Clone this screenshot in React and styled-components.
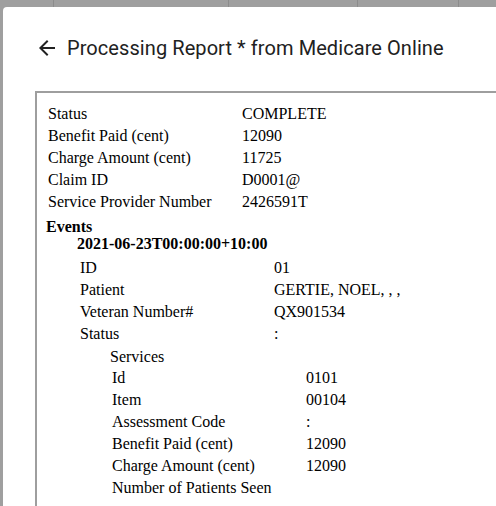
import React from "react";
import styled, { createGlobalStyle } from "styled-components";

const GlobalStyle = createGlobalStyle`
  html, body {
    margin: 0;
    padding: 0;
    overflow: hidden;
    background: #9f9f9f;
  }
  body {
    width: 496px;
    height: 506px;
  }
`;

const Page = styled.div`
  width: 496px;
  height: 506px;
  overflow: hidden;
  display: flex;
  flex-direction: column;
`;

const Strip = styled.div`
  display: flex;
  height: 7px;
  flex-shrink: 0;
`;

const StripCell = styled.div`
  width: ${(p) => p.$w}px;
  flex-shrink: 0;
  border-right: 1px solid #8c8c8c;
  box-sizing: border-box;
`;

const Dialog = styled.div`
  margin-left: 3px;
  width: 620px;
  flex: 1;
  background: #ffffff;
  border-top-left-radius: 4px;
  padding-left: 32px;
  display: flex;
  flex-direction: column;
`;

const TitleBar = styled.div`
  height: 84px;
  display: flex;
  align-items: center;
  gap: 8px;
  padding-bottom: 2px;
  box-sizing: border-box;
  font-family: Roboto, "Noto Sans", sans-serif;
  color: #212121;
`;

const BackIcon = styled.svg`
  width: 24px;
  height: 24px;
  fill: #212121;
  flex-shrink: 0;
`;

const Title = styled.h1`
  margin: 0;
  font-size: 20px;
  font-weight: 400;
  letter-spacing: 0.075px;
`;

const Report = styled.div`
  flex: 1;
  border-top: 2px solid #9e9e9e;
  border-left: 2px solid #9e9e9e;
  padding: 10px 10px 0 11px;
  font-family: "Liberation Serif", "Times New Roman", serif;
  font-size: 16px;
  color: #000;
`;

const Fields = styled.div`
  display: grid;
  grid-template-columns: 194px 1fr;
  line-height: 22px;
`;

const Heading = styled.div`
  font-weight: 700;
  line-height: 17px;
  margin-left: ${(p) => p.$shift || 0}px;
  margin-top: ${(p) => p.$top || 0}px;
`;

const SubHeading = styled.div`
  line-height: 21px;
  margin-left: -2px;
  margin-top: 1px;
`;

const Nested = styled.div`
  padding-left: ${(p) => p.$indent}px;
  margin-top: ${(p) => p.$top || 0}px;
`;

const Row = ({ label, value }) => (
  <>
    <div>{label}</div>
    <div>{value}</div>
  </>
);

export default function App() {
  return (
    <Page>
      <GlobalStyle />
      <Strip>
        <StripCell $w={54} />
        <StripCell $w={175} />
        <StripCell $w={129} />
        <StripCell $w={101} />
      </Strip>
      <Dialog>
        <TitleBar>
          <BackIcon viewBox="0 0 24 24" aria-hidden="true">
            <path d="M20 11H7.83l5.59-5.59L12 4l-8 8 8 8 1.41-1.41L7.83 13H20v-2z" />
          </BackIcon>
          <Title>Processing Report * from Medicare Online</Title>
        </TitleBar>
        <Report>
          <Fields>
            <Row label="Status" value="COMPLETE" />
            <Row label="Benefit Paid (cent)" value="12090" />
            <Row label="Charge Amount (cent)" value="11725" />
            <Row label="Claim ID" value="D0001@" />
            <Row label="Service Provider Number" value="2426591T" />
          </Fields>
          <Heading $shift={-2} $top={5}>Events</Heading>
          <Heading $shift={29}>2021-06-23T00:00:00+10:00</Heading>
          <Nested $indent={32} $top={5}>
            <Fields>
              <Row label="ID" value="01" />
              <Row label="Patient" value="GERTIE, NOEL, , ," />
              <Row label="Veteran Number#" value="QX901534" />
              <Row label="Status" value=":" />
            </Fields>
            <Nested $indent={32}>
              <SubHeading>Services</SubHeading>
              <Fields>
                <Row label="Id" value="0101" />
                <Row label="Item" value="00104" />
                <Row label="Assessment Code" value=":" />
                <Row label="Benefit Paid (cent)" value="12090" />
                <Row label="Charge Amount (cent)" value="12090" />
                <Row label="Number of Patients Seen" value="" />
              </Fields>
            </Nested>
          </Nested>
        </Report>
      </Dialog>
    </Page>
  );
}
